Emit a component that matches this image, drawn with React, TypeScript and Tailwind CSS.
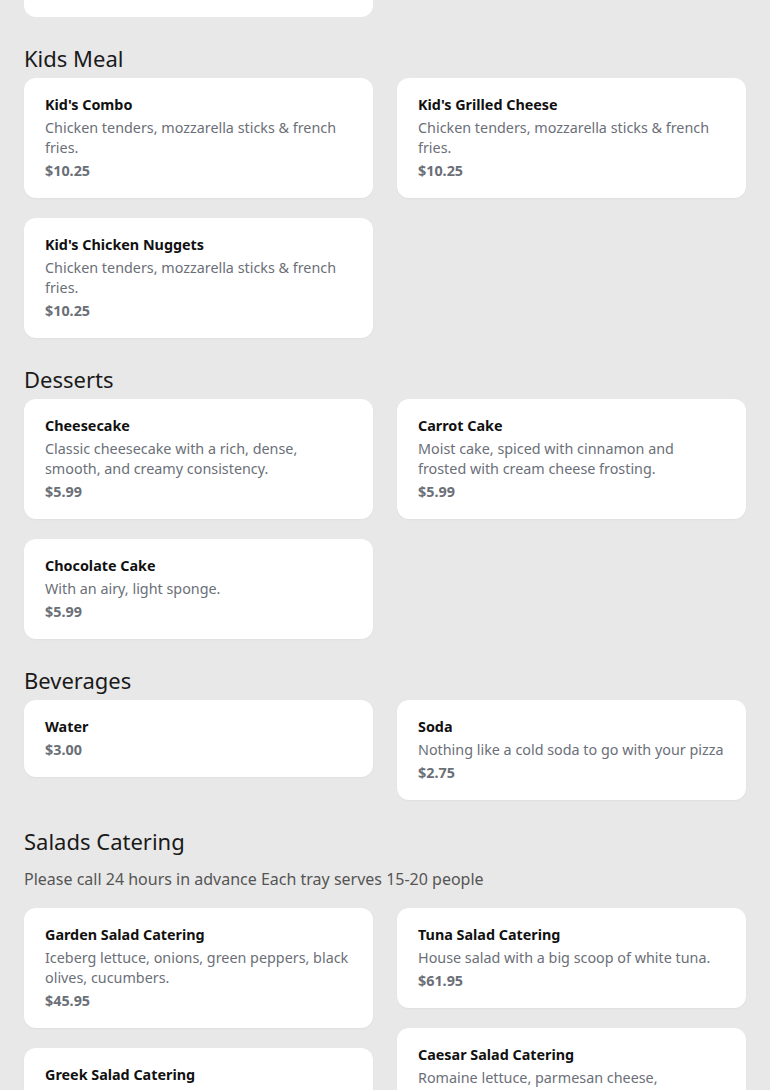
import React from 'react';

interface MenuItem {
    name: string;
    description?: string;
    price: string;
}

interface MenuSection {
    title: string;
    note?: string;
    items: MenuItem[];
}

const KIDS_DESC = 'Chicken tenders, mozzarella sticks & french fries.';

const SECTIONS: MenuSection[] = [
    {
        title: 'Kids Meal',
        items: [
            { name: "Kid's Combo", description: KIDS_DESC, price: '$10.25' },
            { name: "Kid's Grilled Cheese", description: KIDS_DESC, price: '$10.25' },
            { name: "Kid's Chicken Nuggets", description: KIDS_DESC, price: '$10.25' },
        ],
    },
    {
        title: 'Desserts',
        items: [
            {
                name: 'Cheesecake',
                description: 'Classic cheesecake with a rich, dense, smooth, and creamy consistency.',
                price: '$5.99',
            },
            {
                name: 'Carrot Cake',
                description: 'Moist cake, spiced with cinnamon and frosted with cream cheese frosting.',
                price: '$5.99',
            },
            { name: 'Chocolate Cake', description: 'With an airy, light sponge.', price: '$5.99' },
        ],
    },
    {
        title: 'Beverages',
        items: [
            { name: 'Water', price: '$3.00' },
            { name: 'Soda', description: 'Nothing like a cold soda to go with your pizza', price: '$2.75' },
        ],
    },
    {
        title: 'Salads Catering',
        note: 'Please call 24 hours in advance Each tray serves 15-20 people',
        items: [
            {
                name: 'Garden Salad Catering',
                description: 'Iceberg lettuce, onions, green peppers, black olives, cucumbers.',
                price: '$45.95',
            },
            {
                name: 'Tuna Salad Catering',
                description: 'House salad with a big scoop of white tuna.',
                price: '$61.95',
            },
            {
                name: 'Greek Salad Catering',
                description: 'Iceberg lettuce, feta cheese, kalamata olives, tomatoes, onions.',
                price: '$55.95',
            },
            {
                name: 'Caesar Salad Catering',
                description: 'Romaine lettuce, parmesan cheese, homemade croutons & caesar dressing.',
                price: '$45.95',
            },
        ],
    },
];

const MenuCard: React.FC<{ item: MenuItem }> = ({ item }) => (
    <div className="flex flex-col gap-[3px] rounded-xl bg-white px-[21px] pt-[17px] pb-[17px] shadow-[0_1px_2px_rgba(0,0,0,0.04)]">
        <h3 className="text-[14.35px] leading-5 font-bold text-[#111111]">{item.name}</h3>
        {item.description && <p className="text-[14.35px] leading-5 text-[#6b6f78]">{item.description}</p>}
        <span className="text-[14.35px] leading-5 font-bold text-[#6b6f78]">{item.price}</span>
    </div>
);

const Section: React.FC<{ section: MenuSection }> = ({ section }) => {
    const left = section.items.filter((_, i) => i % 2 === 0);
    const right = section.items.filter((_, i) => i % 2 === 1);
    return (
        <section className="pt-[25px]">
            <h2 className="text-[22px] leading-8 text-[#1a1a1a]">{section.title}</h2>
            {section.note && <p className="mt-[10px] mb-[17px] text-base leading-6 text-[#555555]">{section.note}</p>}
            <div className="mt-1 grid grid-cols-2 items-start gap-6">
                <div className="flex flex-col gap-5">
                    {left.map((item) => (
                        <MenuCard key={item.name} item={item} />
                    ))}
                </div>
                <div className="flex flex-col gap-5">
                    {right.map((item) => (
                        <MenuCard key={item.name} item={item} />
                    ))}
                </div>
            </div>
        </section>
    );
};

export default function App() {
    return (
        <div className="h-[1090px] overflow-hidden bg-[#e8e8e8] px-6 font-['Noto_Sans',sans-serif]">
            <div className="grid grid-cols-2 gap-6">
                <div className="h-[17px] rounded-b-xl bg-white" />
            </div>
            {SECTIONS.map((section) => (
                <Section key={section.title} section={section} />
            ))}
        </div>
    );
}
